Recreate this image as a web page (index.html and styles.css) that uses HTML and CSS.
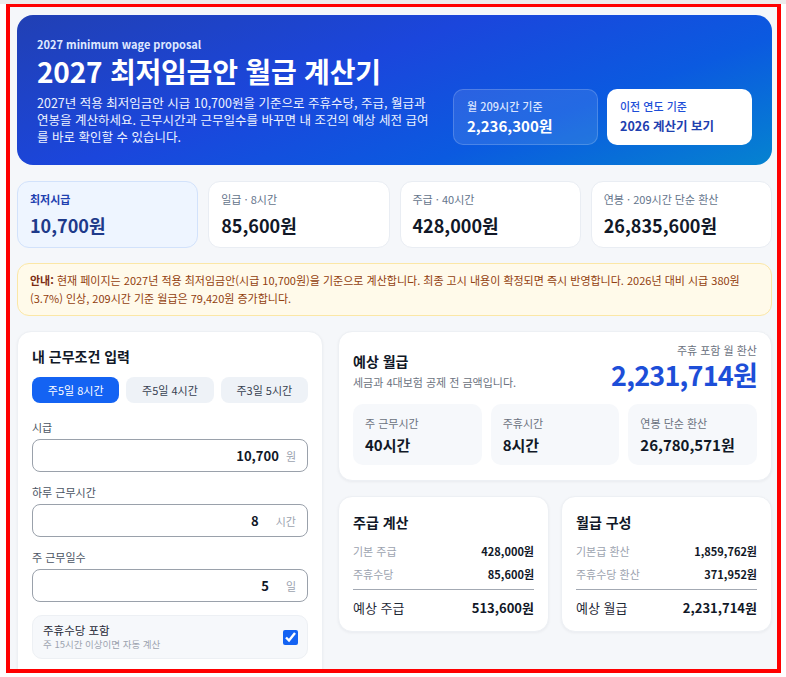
FILE: index.html
```html
<!DOCTYPE html>
<html lang="ko">
<head>
    <meta charset="UTF-8">
    <meta name="viewport" content="width=device-width, initial-scale=1.0">
    <title>2027 최저임금안 월급 계산기</title>
    <link rel="stylesheet" href="styles.css">
</head>
<body>
    <div class="frame">
        <!-- Hero -->
        <header class="hero">
            <div class="hero-text">
                <p class="eyebrow">2027 minimum wage proposal</p>
                <h1>2027 최저임금안 월급 계산기</h1>
                <p class="hero-desc">2027년 적용 최저임금안 시급 10,700원을 기준으로 주휴수당, 주급, 월급과 연봉을 계산하세요. 근무시간과 근무일수를 바꾸면 내 조건의 예상 세전 급여를 바로 확인할 수 있습니다.</p>
            </div>
            <div class="hero-side">
                <div class="hero-box">
                    <span>월 209시간 기준</span>
                    <strong>2,236,300원</strong>
                </div>
                <a class="hero-link" href="#">
                    <span>이전 연도 기준</span>
                    <strong>2026 계산기 보기</strong>
                </a>
            </div>
        </header>

        <!-- Summary stats -->
        <section class="stats">
            <div class="stat stat-primary">
                <span class="stat-label">최저시급</span>
                <strong class="stat-value">10,700원</strong>
            </div>
            <div class="stat">
                <span class="stat-label">일급 · 8시간</span>
                <strong class="stat-value">85,600원</strong>
            </div>
            <div class="stat">
                <span class="stat-label">주급 · 40시간</span>
                <strong class="stat-value">428,000원</strong>
            </div>
            <div class="stat">
                <span class="stat-label">연봉 · 209시간 단순 환산</span>
                <strong class="stat-value">26,835,600원</strong>
            </div>
        </section>

        <p class="notice"><b>안내:</b> 현재 페이지는 2027년 적용 최저임금안(시급 10,700원)을 기준으로 계산합니다. 최종 고시 내용이 확정되면 즉시 반영합니다. 2026년 대비 시급 380원 (3.7%) 인상, 209시간 기준 월급은 79,420원 증가합니다.</p>

        <main class="layout">
            <!-- Input card -->
            <section class="card input-card">
                <h2>내 근무조건 입력</h2>
                <div class="presets">
                    <button class="preset active" type="button">주5일 8시간</button>
                    <button class="preset" type="button">주5일 4시간</button>
                    <button class="preset" type="button">주3일 5시간</button>
                </div>

                <label class="field-label" for="wage">시급</label>
                <div class="input-wrap">
                    <input id="wage" type="text" value="10,700">
                    <span class="unit">원</span>
                </div>

                <label class="field-label" for="hours">하루 근무시간</label>
                <div class="input-wrap">
                    <input id="hours" class="num" type="text" value="8">
                    <span class="unit">시간</span>
                </div>

                <label class="field-label" for="days">주 근무일수</label>
                <div class="input-wrap">
                    <input id="days" class="num" type="text" value="5">
                    <span class="unit">일</span>
                </div>

                <label class="toggle" for="holiday">
                    <span class="toggle-text">
                        <span class="toggle-title">주휴수당 포함</span>
                        <span class="toggle-sub">주 15시간 이상이면 자동 계산</span>
                    </span>
                    <input id="holiday" type="checkbox" checked>
                </label>
            </section>

            <div class="results">
                <section class="card summary">
                    <div class="summary-head">
                        <div>
                            <h2>예상 월급</h2>
                            <p class="muted">세금과 4대보험 공제 전 금액입니다.</p>
                        </div>
                        <div class="summary-total">
                            <span>주휴 포함 월 환산</span>
                            <strong>2,231,714원</strong>
                        </div>
                    </div>
                    <div class="mini-stats">
                        <div class="mini">
                            <span>주 근무시간</span>
                            <strong>40시간</strong>
                        </div>
                        <div class="mini">
                            <span>주휴시간</span>
                            <strong>8시간</strong>
                        </div>
                        <div class="mini">
                            <span>연봉 단순 환산</span>
                            <strong>26,780,571원</strong>
                        </div>
                    </div>
                </section>

                <div class="breakdown">
                    <section class="card calc">
                        <h2>주급 계산</h2>
                        <div class="row"><span>기본 주급</span><b>428,000원</b></div>
                        <div class="row"><span>주휴수당</span><b>85,600원</b></div>
                        <div class="row total"><span>예상 주급</span><b>513,600원</b></div>
                    </section>
                    <section class="card calc">
                        <h2>월급 구성</h2>
                        <div class="row"><span>기본급 환산</span><b>1,859,762원</b></div>
                        <div class="row"><span>주휴수당 환산</span><b>371,952원</b></div>
                        <div class="row total"><span>예상 월급</span><b>2,231,714원</b></div>
                    </section>
                </div>
            </div>
        </main>
    </div>
</body>
</html>
```

FILE: styles.css
```css
* {
    box-sizing: border-box;
}

body {
    margin: 0;
    padding: 0;
    background-color: #ffffff;
    border-top: 4px solid #ececec;
    font-family: "Noto Sans CJK KR", "Noto Sans", sans-serif;
    color: #111827;
}

p, h1, h2 {
    margin: 0;
}

.frame {
    margin: 0 5px 0 6px;
    height: 669px;
    border: 4px solid #ff0000;
    border-top-width: 3px;
    background-color: #f5f7fa;
    padding: 8px 5px 0 7px;
    overflow: hidden;
}

/* Hero */
.hero {
    display: flex;
    justify-content: space-between;
    align-items: flex-end;
    padding: 22px 20px 20px;
    border-radius: 16px;
    background: linear-gradient(160deg, #2140b4 0%, #1b46dc 40%, #0b5ae0 70%, #0583d0 100%);
    color: white;
}

.hero-text {
    width: 396px;
}

.eyebrow {
    font-size: 11px;
    line-height: 14px;
    font-weight: 700;
    color: #dfe8ff;
    margin-bottom: 3px;
}

.hero h1 {
    font-size: 28px;
    line-height: 34px;
    font-weight: 700;
    letter-spacing: -0.2px;
    margin-bottom: 6px;
}

.hero-desc {
    font-size: 12.5px;
    line-height: 17px;
    color: #eef3ff;
}

.hero-side {
    display: flex;
    gap: 9px;
}

.hero-box,
.hero-link {
    width: 145px;
    height: 56px;
    display: flex;
    flex-direction: column;
    justify-content: center;
    gap: 4px;
    padding: 0 13px;
    border-radius: 10px;
}

.hero-box {
    background: rgba(255, 255, 255, 0.1);
    border: 1px solid rgba(255, 255, 255, 0.18);
}

.hero-box span,
.hero-link span {
    font-size: 11px;
    line-height: 14px;
    font-weight: 500;
}

.hero-box span {
    color: #dce6ff;
}

.hero-box strong {
    font-size: 15px;
    line-height: 18px;
}

.hero-link {
    background: white;
    text-decoration: none;
    color: #1d4ed8;
}

.hero-link strong {
    font-size: 12.5px;
    line-height: 18px;
    color: #1e40af;
}

/* Stats */
.stats {
    display: grid;
    grid-template-columns: repeat(4, 1fr);
    gap: 10px;
    margin-top: 16px;
}

.stat {
    display: flex;
    flex-direction: column;
    gap: 6px;
    padding: 9px 12px 10px;
    background: white;
    border: 1px solid #e9edf3;
    border-radius: 12px;
}

.stat-label {
    font-size: 11px;
    line-height: 16px;
    color: #64748b;
}

.stat-value {
    font-size: 18px;
    line-height: 24px;
    font-weight: 700;
    color: #111827;
}

.stat-primary {
    background: #eef5ff;
    border-color: #d2e2fb;
}

.stat-primary .stat-label {
    color: #1e40af;
    font-weight: 700;
}

.stat-primary .stat-value {
    color: #1e3a8a;
}

/* Notice */
.notice {
    margin-top: 15px;
    padding: 7px 12px 8px;
    background: #fffaea;
    border: 1px solid #fbe7a6;
    border-radius: 12px;
    font-size: 11px;
    line-height: 18px;
    color: #92400e;
}

.notice b {
    color: #7c2d12;
}

/* Main layout */
.layout {
    display: grid;
    grid-template-columns: 306px 1fr;
    gap: 15px;
    align-items: start;
    margin-top: 15px;
}

.card {
    background: white;
    border: 1px solid #edf0f4;
    border-radius: 14px;
    box-shadow: 0 1px 3px rgba(15, 23, 42, 0.05);
}

.card h2 {
    font-size: 14px;
    line-height: 20px;
    font-weight: 700;
    color: #111827;
}

.input-card {
    padding: 14px 14px 40px;
}

.presets {
    display: grid;
    grid-template-columns: repeat(3, 1fr);
    gap: 7px;
    margin: 11px 0 16px;
}

.preset {
    height: 26px;
    border: none;
    border-radius: 8px;
    background: #eef2f7;
    color: #374151;
    font-family: inherit;
    font-size: 11px;
    cursor: pointer;
}

.preset.active {
    background: #1463f3;
    color: white;
}

.field-label {
    display: block;
    font-size: 11px;
    line-height: 16px;
    color: #4b5563;
    margin-bottom: 4px;
}

.input-wrap {
    display: flex;
    align-items: center;
    height: 33px;
    padding: 0 11px 0 10px;
    border: 1px solid #9aa1ab;
    border-radius: 8px;
    margin-bottom: 12px;
}

.input-wrap input {
    flex: 1;
    min-width: 0;
    border: none;
    outline: none;
    background: transparent;
    text-align: right;
    font-family: inherit;
    font-size: 13px;
    font-weight: 700;
    color: #111827;
    padding: 0;
}

.input-wrap input.num {
    padding-right: 10px;
}

.unit {
    margin-left: 7px;
    font-size: 11px;
    color: #9ca3af;
}

.toggle {
    display: flex;
    align-items: center;
    justify-content: space-between;
    margin-top: 13px;
    padding: 7px 9px 7px 10px;
    background: #f6f8fb;
    border: 1px solid #edf0f4;
    border-radius: 10px;
}

.toggle-text {
    display: flex;
    flex-direction: column;
}

.toggle-title {
    font-size: 11.5px;
    line-height: 15px;
    color: #1f2937;
}

.toggle-sub {
    font-size: 9.5px;
    line-height: 13px;
    color: #9ca3af;
}

.toggle input {
    width: 15px;
    height: 15px;
    margin: 0;
    accent-color: #1463f3;
}

/* Results */
.summary {
    padding: 11px 14px 15px;
}

.summary-head {
    display: flex;
    justify-content: space-between;
    align-items: flex-end;
}

.summary-head h2 {
    margin-top: 6px;
}

.muted {
    margin-top: 3px;
    font-size: 11px;
    line-height: 16px;
    color: #6b7280;
}

.summary-total {
    display: flex;
    flex-direction: column;
    align-items: flex-end;
}

.summary-total span {
    font-size: 11px;
    line-height: 14px;
    margin-bottom: 2px;
    color: #6b7280;
}

.summary-total strong {
    font-size: 27px;
    line-height: 31px;
    font-weight: 700;
    letter-spacing: -0.8px;
    color: #1d4ed8;
}

.mini-stats {
    display: grid;
    grid-template-columns: repeat(3, 1fr);
    gap: 9px;
    margin-top: 14px;
}

.mini {
    display: flex;
    flex-direction: column;
    gap: 4px;
    padding: 11px 12px 10px;
    background: #f6f8fb;
    border-radius: 10px;
}

.mini span {
    font-size: 11px;
    line-height: 16px;
    color: #6b7280;
}

.mini strong {
    font-size: 15px;
    line-height: 20px;
    font-weight: 700;
}

.breakdown {
    display: grid;
    grid-template-columns: 1fr 1fr;
    gap: 12px;
    margin-top: 15px;
}

.calc {
    padding: 15px 14px 13px;
}

.calc h2 {
    margin-bottom: 11px;
}

.row {
    display: flex;
    justify-content: space-between;
    font-size: 11px;
    line-height: 16px;
    margin-bottom: 7px;
}

.row span {
    color: #9ca3af;
}

.row b {
    color: #111827;
}

.row.total {
    margin: 0;
    padding-top: 8px;
    border-top: 1.5px solid #a3a9b3;
    font-size: 13px;
    line-height: 20px;
}

.row.total span {
    color: #1f2937;
}
```
